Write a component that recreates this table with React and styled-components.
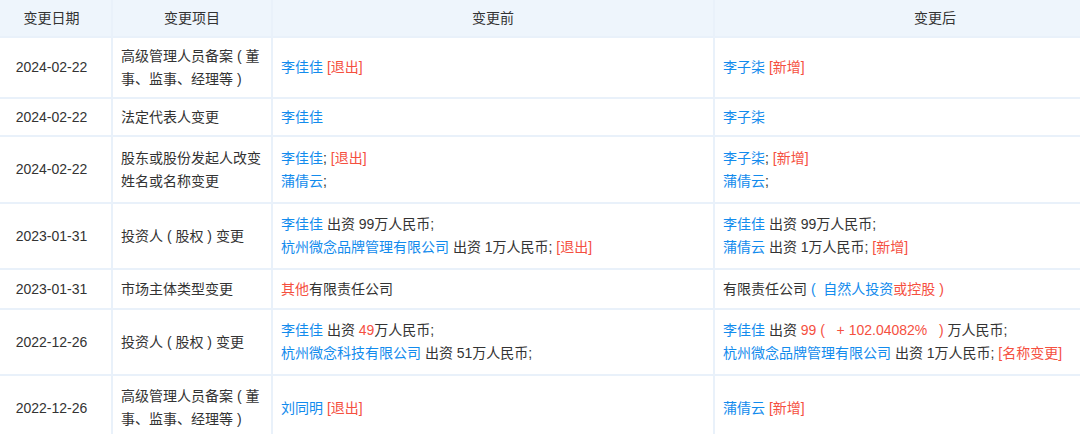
import React from "react";
import styled, { createGlobalStyle } from "styled-components";

const GlobalStyle = createGlobalStyle`
    html, body {
        margin: 0;
        padding: 0;
        background: #fff;
    }
    body {
        font-family: "Liberation Sans", "Noto Sans CJK SC", sans-serif;
        font-size: 14px;
        color: #333;
    }
`;

const Page = styled.div`
    width: 1080px;
    height: 434px;
    overflow: hidden;
    background: #fff;
`;

const Table = styled.div`
    display: grid;
    grid-template-columns: 119px 158px 440px 440px;
    gap: 2px;
    width: 1163px;
    margin-left: -8px;
    background: #e9f1fa;
`;

const HeadCell = styled.div`
    height: 36px;
    display: flex;
    align-items: center;
    justify-content: center;
    background: #eef5fc;
    color: #333;
    line-height: 22px;
`;

const Cell = styled.div`
    height: ${({ h }) => h}px;
    display: flex;
    flex-direction: column;
    justify-content: center;
    align-items: ${({ center }) => (center ? "center" : "flex-start")};
    padding: 0 8px;
    background: #fff;
    line-height: 23px;
    color: #333;
    box-sizing: border-box;
`;

const Line = styled.div`
    white-space: pre;
`;

const Wrap = styled.div`
    white-space: normal;
    word-break: break-all;
`;

const Link = styled.span`
    color: #128bed;
`;

const Red = styled.span`
    color: #f5503f;
`;

const rows = [
    {
        h: 59,
        date: "2024-02-22",
        item: "高级管理人员备案 ( 董事、监事、经理等 )",
        before: [<><Link>李佳佳</Link> <Red>[退出]</Red></>],
        after: [<><Link>李子柒</Link> <Red>[新增]</Red></>],
    },
    {
        h: 36,
        date: "2024-02-22",
        item: "法定代表人变更",
        before: [<Link>李佳佳</Link>],
        after: [<Link>李子柒</Link>],
    },
    {
        h: 65,
        date: "2024-02-22",
        item: "股东或股份发起人改变姓名或名称变更",
        before: [
            <><Link>李佳佳</Link>; <Red>[退出]</Red></>,
            <><Link>蒲倩云</Link>;</>,
        ],
        after: [
            <><Link>李子柒</Link>; <Red>[新增]</Red></>,
            <><Link>蒲倩云</Link>;</>,
        ],
    },
    {
        h: 64,
        date: "2023-01-31",
        item: "投资人 ( 股权 ) 变更",
        before: [
            <><Link>李佳佳</Link> 出资 99万人民币;</>,
            <><Link>杭州微念品牌管理有限公司</Link> 出资 1万人民币; <Red>[退出]</Red></>,
        ],
        after: [
            <><Link>李佳佳</Link> 出资 99万人民币;</>,
            <><Link>蒲倩云</Link> 出资 1万人民币; <Red>[新增]</Red></>,
        ],
    },
    {
        h: 38,
        date: "2023-01-31",
        item: "市场主体类型变更",
        before: [<><Red>其他</Red>有限责任公司</>],
        after: [<>有限责任公司<Link> (  自然人投资</Link><Red>或控股 )</Red></>],
    },
    {
        h: 64,
        date: "2022-12-26",
        item: "投资人 ( 股权 ) 变更",
        before: [
            <><Link>李佳佳</Link> 出资 <Red>49</Red>万人民币;</>,
            <><Link>杭州微念科技有限公司</Link> 出资 51万人民币;</>,
        ],
        after: [
            <><Link>李佳佳</Link> 出资 <Red>99 (   + 102.04082%   ) </Red>万人民币;</>,
            <><Link>杭州微念品牌管理有限公司</Link> 出资 1万人民币; <Red>[名称变更]</Red></>,
        ],
    },
    {
        h: 64,
        date: "2022-12-26",
        item: "高级管理人员备案 ( 董事、监事、经理等 )",
        before: [<><Link>刘同明</Link> <Red>[退出]</Red></>],
        after: [<><Link>蒲倩云</Link> <Red>[新增]</Red></>],
    },
];

const App = () => {
    return (
        <Page>
            <GlobalStyle />
            <Table>
                <HeadCell>变更日期</HeadCell>
                <HeadCell>变更项目</HeadCell>
                <HeadCell>变更前</HeadCell>
                <HeadCell>变更后</HeadCell>

                {rows.map((row, i) => (
                    <React.Fragment key={i}>
                        <Cell h={row.h} center>{row.date}</Cell>
                        <Cell h={row.h}><Wrap>{row.item}</Wrap></Cell>
                        <Cell h={row.h}>
                            {row.before.map((l, j) => <Line key={j}>{l}</Line>)}
                        </Cell>
                        <Cell h={row.h}>
                            {row.after.map((l, j) => <Line key={j}>{l}</Line>)}
                        </Cell>
                    </React.Fragment>
                ))}
            </Table>
        </Page>
    );
};

export default App;
